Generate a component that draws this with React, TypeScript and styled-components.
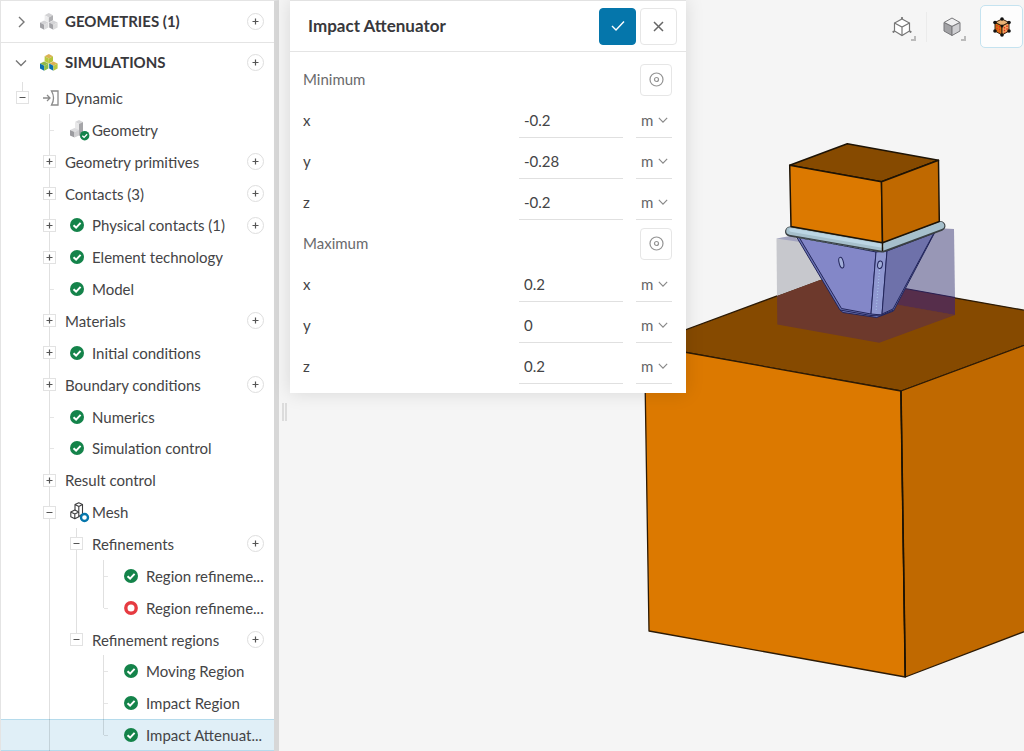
import React from "react";
import styled, { createGlobalStyle, css } from "styled-components";

const color = {
  text: "#444446",
  strong: "#38383c",
  muted: "#6a6a6c",
  line: "#e4e4e4",
  blue: "#0576ab",
  green: "#14834a",
  red: "#e63b41",
  canvas: "#f5f5f5",
};

const GlobalStyle = createGlobalStyle`
  *, *::before, *::after { box-sizing: border-box; }
  body { margin: 0; font-family: Lato, "Liberation Sans", sans-serif; font-size: 15px; color: ${color.text}; }
  button, input, select { font: inherit; color: inherit; margin: 0; }
  svg { display: block; }
`;

/* ---------- layout ---------- */

const Workbench = styled.div`
  display: flex;
  height: 100vh;
  overflow: hidden;
  background: ${color.canvas};
`;

const Sidebar = styled.nav`
  display: flex;
  flex-direction: column;
  flex: none;
  width: 279px;
  background: #fff;
  border: solid ${color.line};
  border-width: 1px 0 0 1px;
  border-right: 5px solid #d7d7d7;
`;

const SectionHead = styled.div<{ $divided?: boolean }>`
  display: flex;
  align-items: center;
  flex: none;
  height: ${(p) => (p.$divided ? 42 : 39)}px;
  padding: 0 8px 0 14px;
  border-bottom: ${(p) => (p.$divided ? `1px solid ${color.line}` : "none")};
`;

const SectionToggle = styled.button`
  display: flex;
  align-items: center;
  flex: 1;
  height: 100%;
  padding: 0;
  border: 0;
  background: none;
  text-align: left;
  color: ${color.strong};
  cursor: pointer;
`;

const SectionTitle = styled.span`
  padding-bottom: 2px;
  line-height: 18px;
  font-weight: 700;
`;

const HeadSlot = styled.span`
  width: 25px;
`;

const Tree = styled.ul`
  display: flex;
  flex-direction: column;
  flex: 1;
  min-height: 0;
  margin: 0;
  padding: 0;
  list-style: none;
`;

const TreeRow = styled.li<{ $selected?: boolean }>`
  display: flex;
  align-items: center;
  flex: 1 1 32px;
  max-height: 32px;
  padding: 0 8px;
  ${(p) =>
    p.$selected &&
    css`
      background: #e0eff7;
      box-shadow: inset 0 1px #b5dbec, inset 0 -1px #b5dbec;
    `}
`;

type GuideKind = "none" | "line" | "tee" | "elbow" | "upper";

const Guide = styled.span<{ $kind: GuideKind }>`
  position: relative;
  display: flex;
  align-items: center;
  justify-content: center;
  align-self: stretch;
  flex: 0 0 27px;
  &::before {
    content: "";
    display: ${(p) => (p.$kind === "none" ? "none" : "block")};
    position: absolute;
    left: 13px;
    top: 0;
    width: 1px;
    height: ${(p) => (p.$kind === "elbow" || p.$kind === "upper" ? "50%" : "100%")};
    background: rgba(0, 0, 0, 0.12);
  }
  &::after {
    content: "";
    display: ${(p) => (p.$kind === "tee" || p.$kind === "elbow" ? "block" : "none")};
    position: absolute;
    left: 14px;
    top: 50%;
    width: 4px;
    height: 1px;
    background: rgba(0, 0, 0, 0.1);
  }
`;

const ExpandButton = styled.button`
  position: relative;
  z-index: 1;
  display: grid;
  place-items: center;
  width: 13px;
  height: 13px;
  padding: 0;
  border: 1px solid #e2e2e2;
  background: #fff;
  color: #555;
`;

const NodeBody = styled.span`
  display: flex;
  align-items: center;
  flex: 1;
  min-width: 0;
`;

const NodeIcon = styled.span`
  flex: 0 0 27px;
  padding-left: 7px;
`;

const NodeLabel = styled.a`
  flex: 1;
  min-width: 0;
  padding-left: 2px;
  line-height: 20px;
  overflow: hidden;
  text-overflow: ellipsis;
  white-space: nowrap;
  color: inherit;
  text-decoration: none;
`;

const AddButton = styled.button`
  display: grid;
  place-items: center;
  flex: none;
  width: 17px;
  height: 17px;
  margin-right: 2px;
  padding: 0;
  border: 1px solid #dedede;
  border-radius: 50%;
  background: #fff;
  color: #555;
`;

const Viewer = styled.main`
  position: relative;
  flex: 1;
  min-width: 0;
  padding-left: 11px;
  background: ${color.canvas};
`;

const Scene = styled.svg`
  position: absolute;
  inset: 0;
  width: 100%;
  height: 100%;
`;

const Splitter = styled.div`
  position: absolute;
  left: 3px;
  top: 403px;
  width: 5px;
  height: 18px;
  border: solid #dcdcdc;
  border-width: 0 2px;
`;

const Panel = styled.form`
  position: relative;
  width: 396px;
  background: #fff;
  border-top: 1px solid #e2e2e2;
  box-shadow: 0 0 18px rgba(0, 0, 0, 0.12);
`;

const PanelHead = styled.header`
  display: flex;
  align-items: center;
  gap: 4px;
  height: 51px;
  padding: 0 9px 0 18px;
  border-bottom: 1px solid ${color.line};
`;

const PanelTitle = styled.h1`
  flex: 1;
  margin: 0;
  font-size: 17px;
  line-height: 24px;
  font-weight: 700;
  color: ${color.strong};
`;

const PanelButton = styled.button<{ $primary?: boolean }>`
  display: grid;
  place-items: center;
  width: 37px;
  height: 37px;
  padding: 0;
  border: 1px solid ${(p) => (p.$primary ? color.blue : "#e6e6e6")};
  border-radius: 4px;
  background: ${(p) => (p.$primary ? color.blue : "#fff")};
  color: ${(p) => (p.$primary ? "#fff" : "#666")};
`;

const Fields = styled.div`
  padding: 4px 14px 9px 13px;
`;

const FieldSet = styled.fieldset`
  margin: 0;
  padding: 0;
  border: 0;
`;

const FieldRow = styled.div`
  display: flex;
  align-items: center;
  height: 41px;
  padding-top: 6px;
`;

const FieldName = styled.label`
  flex: 1;
  padding-bottom: 2px;
`;

const GroupName = styled.span`
  flex: 1;
  padding-bottom: 2px;
  color: ${color.muted};
`;

const PickButton = styled.button`
  display: grid;
  place-items: center;
  width: 32px;
  height: 32px;
  padding: 0;
  border: 1px solid #e6e6e6;
  border-radius: 4px;
  background: #fff;
  color: #949494;
`;

const ValueInput = styled.input`
  width: 104px;
  height: 35px;
  margin-right: 13px;
  padding: 0 5px;
  border: 0;
  border-bottom: 1px solid #e0e0e0;
  background: none;
`;

const UnitField = styled.span`
  position: relative;
  width: 36px;
  height: 35px;
  border-bottom: 1px solid #e0e0e0;
  color: #666;
  svg {
    position: absolute;
    right: 4px;
    top: 12px;
    pointer-events: none;
  }
`;

const UnitSelect = styled.select`
  appearance: none;
  width: 100%;
  height: 100%;
  padding: 0 0 0 5px;
  border: 0;
  background: none;
`;

const ViewBar = styled.div`
  position: absolute;
  top: 5px;
  right: 1px;
  display: flex;
  align-items: center;
  gap: 7px;
`;

const ViewButton = styled.button<{ $active?: boolean }>`
  position: relative;
  display: grid;
  place-items: center;
  width: 43px;
  height: 43px;
  padding: 0;
  border: 1px solid ${(p) => (p.$active ? "#c5e3f0" : "transparent")};
  border-radius: 5px;
  background: ${(p) => (p.$active ? "#fdfdfd" : "none")};
`;

const MenuCorner = styled.span`
  position: absolute;
  right: 6px;
  bottom: 6px;
  width: 5px;
  height: 5px;
  border: solid #bbb;
  border-width: 0 2px 2px 0;
`;

const ViewDivider = styled.span`
  width: 1px;
  height: 30px;
  margin: 0 -4px;
  background: #ebebeb;
`;

/* ---------- icons ---------- */

const Plus = () => (
  <svg width="7" height="7" viewBox="0 0 7 7" stroke="currentColor" strokeWidth="1.2">
    <path d="M3.5 0.5v6M0.5 3.5h6" />
  </svg>
);

const Minus = () => (
  <svg width="7" height="7" viewBox="0 0 7 7" stroke="currentColor" strokeWidth="1">
    <path d="M0.5 3.5h6" />
  </svg>
);

const Chevron = ({ open, size = 12, tone = "#777" }: { open?: boolean; size?: number; tone?: string }) => (
  <svg width={size} height={size} viewBox="0 0 12 12" fill="none" stroke={tone} strokeWidth="1.4">
    <path d={open ? "M1 3.5l5 5 5-5" : "M4 1l5 5-5 5"} />
  </svg>
);

type Shades = { top: string; left: string; right: string };

const Block = ({ x, y, top, left, right }: Shades & { x: number; y: number }) => (
  <g transform={`translate(${x} ${y})`}>
    <path d="M0 2.2L4.2 0L8.4 2.2L4.2 4.4z" fill={top} />
    <path d="M0 2.2L4.2 4.4V9.4L0 7.2z" fill={left} />
    <path d="M8.4 2.2L4.2 4.4V9.4L8.4 7.2z" fill={right} />
  </g>
);

const Cubes = ({ colored }: { colored?: boolean }) => {
  const back = colored
    ? { top: "#dcb255", left: "#b9c83f", right: "#b4c43c" }
    : { top: "#d2d2d4", left: "#ececed", right: "#b0b0b3" };
  const left = colored
    ? { top: "#8fb84a", left: "#0a70b0", right: "#8fbf4a" }
    : { top: "#d4d4d6", left: "#a2a2a6", right: "#dcdcdd" };
  const right = colored
    ? { top: "#dcb255", left: "#0a70b0", right: "#b9c63f" }
    : { top: "#d4d4d6", left: "#a2a2a6", right: "#dcdcdd" };
  return (
    <svg width="18" height="17" viewBox="0 0 18 17">
      <Block x={4.6} y={0} {...back} />
      <Block x={0} y={7.4} {...left} />
      <Block x={9.2} y={7.4} {...right} />
    </svg>
  );
};

const CheckBadge = () => (
  <>
    <circle cx="7" cy="7" r="7" fill={color.green} />
    <path d="M3.5 7.2L6.1 9.6L10.6 4.9" fill="none" stroke="#fff" strokeWidth="2" />
  </>
);

const StatusDone = () => (
  <svg width="14" height="14" viewBox="0 0 14 14">
    <CheckBadge />
  </svg>
);

const StatusOpen = () => (
  <svg width="14" height="14" viewBox="0 0 14 14">
    <circle cx="7" cy="7" r="5.2" fill="#fff" stroke={color.red} strokeWidth="3.4" />
  </svg>
);

const DynamicIcon = () => (
  <svg width="17" height="16" viewBox="1 0 17 16" fill="none" stroke="#8b8b8b" strokeWidth="1.3">
    <path d="M0 8h7.5M5 5l3 3-3 3" />
    <path d="M9.5 1H16v14H9.500c2.600-4.500 2.600-9.500 0-14z" />
  </svg>
);

const GeometryIcon = () => (
  <svg width="20" height="22" viewBox="0 0 20 22">
    <path d="M5 3L9 1L13 3L9 5z" fill="#d6d6d8" />
    <path d="M5 3L9 5V13L5 11z" fill="#e8e8e9" />
    <path d="M13 3L9 5V17L13 15z" fill="#a6a6a9" />
    <path d="M0 11L4.500 9L9 11L4.500 13z" fill="#dcdcde" />
    <path d="M0 11L4.500 13V18.500L0 16.500z" fill="#9b9b9f" />
    <path d="M9 11L4.500 13V18.500L9 16.500z" fill="#cfcfd1" />
    <g transform="translate(10 12) scale(0.67)">
      <CheckBadge />
    </g>
  </svg>
);

const MeshIcon = () => (
  <svg width="20" height="22" viewBox="0 0 20 22" fill="none" stroke="#3d3d3f" strokeWidth="1.100" strokeLinejoin="round">
    <path d="M5 3.500L8.800 1.800L12.500 3.500L8.800 5.400zM5 3.500V9.500M8.800 5.400V10.500M12.500 3.500V13L8.800 15.500" />
    <path d="M0.800 11L4.800 9L8.800 11L4.800 13zM0.800 11V15.800L4.800 17.800L8.800 15.800V11M4.800 13V17.800" />
    <circle cx="14.500" cy="16.500" r="3.500" fill="#fff" stroke={color.blue} strokeWidth="2.400" />
  </svg>
);

const CheckMark = () => (
  <svg width="14" height="12" viewBox="0 0 14 12" fill="none" stroke="currentColor" strokeWidth="1.4">
    <path d="M1 6l4 4 8-8.5" />
  </svg>
);

const Cross = () => (
  <svg width="11" height="11" viewBox="0 0 11 11" fill="none" stroke="currentColor" strokeWidth="1.5">
    <path d="M1 1l9 9M10 1l-9 9" />
  </svg>
);

const Target = () => (
  <svg width="15" height="15" viewBox="0 0 15 15" fill="none" stroke="currentColor" strokeWidth="1.2">
    <circle cx="7.5" cy="7.5" r="6.5" />
    <circle cx="7.5" cy="7.5" r="2" />
  </svg>
);

const WireCube = () => (
  <svg width="20" height="22" viewBox="0 0 20 22" fill="none" stroke="#777" strokeWidth="1.2">
    <path d="M10 3L17.500 7V15L10 19.500L2.500 15V7z" fill="#fff" />
    <path d="M2.500 7L10 11L17.500 7M10 11V19.500M10 3V1.500M2.500 15L1 16M17.500 15L19 16" />
    <g fill="#777" stroke="none">
      <circle cx="10" cy="2" r="1.1" />
      <circle cx="1.500" cy="15.800" r="1.1" />
      <circle cx="18.500" cy="15.800" r="1.1" />
    </g>
  </svg>
);

const SolidCube = () => (
  <svg width="18" height="20" viewBox="0 0 18 20" stroke="#77777a" strokeWidth="1">
    <path d="M1 5.5L9 1L17 5.5L9 9.5z" fill="#efeff0" />
    <path d="M1 5.5L9 9.5V18.5L1 14z" fill="#a3a3a6" />
    <path d="M17 5.5L9 9.5V18.5L17 14z" fill="#cfcfd2" />
  </svg>
);

const MeshedCube = () => (
  <svg width="20" height="22" viewBox="0 0 20 22" stroke="#38220f" strokeWidth="1">
    <path d="M3 6.500L10 3L17 6.500L10 10z" fill="#e9b375" />
    <path d="M3 6.500L10 10V19L3 15z" fill="#d97912" />
    <path d="M17 6.500L10 10V19L17 15z" fill="#f3a860" />
    <path d="M5 9v6M7.5 10v6.5M12.5 11v6M15 9.5v6" stroke="#e12b1d" strokeWidth="1.4" strokeDasharray="1.5 1.2" />
    <g fill="#111" stroke="none">
      <circle cx="10" cy="3" r="1.800" />
      <circle cx="3" cy="6.500" r="1.800" />
      <circle cx="17" cy="6.500" r="1.800" />
      <circle cx="10" cy="10" r="1.500" />
      <circle cx="3" cy="15" r="1.800" />
      <circle cx="17" cy="15" r="1.800" />
      <circle cx="10" cy="19" r="1.800" />
    </g>
  </svg>
);

/* ---------- 3D scene ---------- */

const Model = () => (
  <Scene viewBox="279 0 745 751" preserveAspectRatio="xMaxYMin slice" aria-label="Impact model">
    <g stroke="#2c1a05" strokeWidth="1.3" strokeLinejoin="round">
      <path d="M644.5 345L831 276L1060 316.5L1060 332L901 391z" fill="#864a00" />
      <path d="M644.5 345L901 391L905.3 677L649 631z" fill="#dc7900" />
      <path d="M901 391L1060 332L1060 618L905.3 677z" fill="#c06900" />
    </g>
    <path d="M901 391L905.3 677" stroke="#1a1204" strokeWidth="1.6" />

    {/* refinement region box, split where it covers the background and the block */}
    <path d="M776.5 238.5L796 236L823 279L777 296z" fill="#c7c8cd" />
    <path d="M776.5 238.5L793 235.5L800 242z" fill="#a3a4c0" />
    <path d="M935 228L954 229L955 297.5L905 289z" fill="#9897b6" />
    <path d="M777 296L820 280L897 304.5L955 315L879.3 342.7L777.3 324.5z" fill="#6d392c" />
    <path d="M905 288.5L955 297.5V315L896 304.5z" fill="#562e4b" />
    <path d="M905 288.5L955 297.5" stroke="#2a1f52" strokeWidth="1.2" />

    {/* attenuator */}
    <g stroke="#22255a" strokeWidth="1" strokeLinejoin="round">
      <path d="M796 236L840 310L843 312.5L876.7 317.5L893.5 311L935 232L882 248z" fill="#6c74b4" />
      <path d="M799 237L876 252L871 314L841.5 308.5z" fill="#8387c8" />
      <path d="M876 252L887 251L882 315L871 314z" fill="#8f97d0" />
      <path d="M887 251L934 233L893 309L882 314z" fill="#6e71aa" />
      <path d="M840 310L871 315.5L882 315L893.5 310" fill="none" />
      <ellipse cx="841.3" cy="262.7" rx="2.2" ry="5.5" fill="#a2aed9" transform="rotate(-14 841.3 262.7)" />
      <ellipse cx="880" cy="264.7" rx="2.4" ry="3.8" fill="#a2aed9" transform="rotate(8 880 264.7)" />
    </g>
    <path d="M879.5 270L876 312" stroke="#a9c6ea" strokeWidth="1" strokeDasharray="1 2" />

    {/* flange */}
    <g fill="none" strokeLinecap="round" strokeLinejoin="round">
      <path d="M790 231.5L882.5 247.5L940.5 226" stroke="#3a4043" strokeWidth="10" />
      <path d="M790 231L882.5 247L940.5 225.5" stroke="#a6c0cc" strokeWidth="7.5" />
      <path d="M791 230L882.5 246" stroke="#bcd6e4" strokeWidth="3.5" />
      <path d="M800 238L872 250.5" stroke="#4e5a66" strokeWidth="1.2" strokeDasharray="3 2.5" />
    </g>

    <g stroke="#1d1305" strokeWidth="1.5" strokeLinejoin="round">
      <path d="M789.7 165.2L847.3 143.8L938.5 160.2L881.5 181.8z" fill="#864a00" />
      <path d="M789.7 165.2L881.5 181.8L882.5 242.7L791 226.5z" fill="#dc7900" />
      <path d="M881.5 181.8L938.5 160.2L939.3 221.5L882.5 242.7z" fill="#c06900" />
      <path d="M882.5 242V251" />
    </g>
  </Scene>
);

/* ---------- data ---------- */

type Node = {
  label: string;
  guides: GuideKind[];
  toggle?: "plus" | "minus";
  icon?: React.ReactNode;
  add?: boolean;
  selected?: boolean;
};

const nodes: Node[] = [
  { label: "Dynamic", guides: ["upper"], toggle: "minus", icon: <DynamicIcon /> },
  { label: "Geometry", guides: ["none", "tee"], icon: <GeometryIcon /> },
  { label: "Geometry primitives", guides: ["none", "line"], toggle: "plus", add: true },
  { label: "Contacts (3)", guides: ["none", "line"], toggle: "plus", add: true },
  { label: "Physical contacts (1)", guides: ["none", "line"], toggle: "plus", icon: <StatusDone />, add: true },
  { label: "Element technology", guides: ["none", "line"], toggle: "plus", icon: <StatusDone /> },
  { label: "Model", guides: ["none", "tee"], icon: <StatusDone /> },
  { label: "Materials", guides: ["none", "line"], toggle: "plus", add: true },
  { label: "Initial conditions", guides: ["none", "line"], toggle: "plus", icon: <StatusDone /> },
  { label: "Boundary conditions", guides: ["none", "line"], toggle: "plus", add: true },
  { label: "Numerics", guides: ["none", "tee"], icon: <StatusDone /> },
  { label: "Simulation control", guides: ["none", "tee"], icon: <StatusDone /> },
  { label: "Result control", guides: ["none", "line"], toggle: "plus" },
  { label: "Mesh", guides: ["none", "line"], toggle: "minus", icon: <MeshIcon /> },
  { label: "Refinements", guides: ["none", "line", "line"], toggle: "minus", add: true },
  { label: "Region refineme...", guides: ["none", "line", "line", "tee"], icon: <StatusDone /> },
  { label: "Region refineme...", guides: ["none", "line", "line", "elbow"], icon: <StatusOpen /> },
  { label: "Refinement regions", guides: ["none", "line", "upper"], toggle: "minus", add: true },
  { label: "Moving Region", guides: ["none", "line", "none", "tee"], icon: <StatusDone /> },
  { label: "Impact Region", guides: ["none", "line", "none", "tee"], icon: <StatusDone /> },
  { label: "Impact Attenuat...", guides: ["none", "line", "none", "elbow"], icon: <StatusDone />, selected: true },
];

const groups = [
  { name: "Minimum", values: { x: "-0.2", y: "-0.28", z: "-0.2" } },
  { name: "Maximum", values: { x: "0.2", y: "0", z: "0.2" } },
];

/* ---------- parts ---------- */

const TreeNode = ({ node }: { node: Node }) => (
  <TreeRow $selected={node.selected}>
    {node.guides.map((kind, i) => (
      <Guide key={i} $kind={kind}>
        {node.toggle && i === node.guides.length - 1 && (
          <ExpandButton type="button" aria-label={`Toggle ${node.label}`}>
            {node.toggle === "plus" ? <Plus /> : <Minus />}
          </ExpandButton>
        )}
      </Guide>
    ))}
    <NodeBody>
      {node.icon && <NodeIcon>{node.icon}</NodeIcon>}
      <NodeLabel href="#">{node.label}</NodeLabel>
    </NodeBody>
    {node.add && (
      <AddButton type="button" aria-label={`Add to ${node.label}`}>
        <Plus />
      </AddButton>
    )}
  </TreeRow>
);

const Section = ({ title, open, divided }: { title: string; open?: boolean; divided?: boolean }) => (
  <SectionHead $divided={divided}>
    <SectionToggle type="button" aria-expanded={!!open}>
      <HeadSlot>
        <Chevron open={open} />
      </HeadSlot>
      <HeadSlot>
        <Cubes colored={open} />
      </HeadSlot>
      <SectionTitle>{title}</SectionTitle>
    </SectionToggle>
    <AddButton type="button" aria-label={`Add to ${title}`}>
      <Plus />
    </AddButton>
  </SectionHead>
);

const Vector = ({ name, values }: { name: string; values: Record<string, string> }) => (
  <FieldSet aria-label={name}>
    <FieldRow>
      <GroupName>{name}</GroupName>
      <PickButton type="button" aria-label={`Pick ${name}`}>
        <Target />
      </PickButton>
    </FieldRow>
    {Object.entries(values).map(([axis, value]) => (
      <FieldRow key={axis}>
        <FieldName htmlFor={`${name}-${axis}`}>{axis}</FieldName>
        <ValueInput id={`${name}-${axis}`} defaultValue={value} />
        <UnitField>
          <UnitSelect aria-label={`${name} ${axis} unit`}>
            <option>m</option>
          </UnitSelect>
          <Chevron open size={10} tone="#888" />
        </UnitField>
      </FieldRow>
    ))}
  </FieldSet>
);

export default function App() {
  return (
    <Workbench>
      <GlobalStyle />
      <Sidebar>
        <Section title="GEOMETRIES (1)" divided />
        <Section title="SIMULATIONS" open />
        <Tree>
          {nodes.map((node, i) => (
            <TreeNode key={i} node={node} />
          ))}
        </Tree>
      </Sidebar>
      <Viewer>
        <Model />
        <Splitter />
        <Panel onSubmit={(e) => e.preventDefault()}>
          <PanelHead>
            <PanelTitle>Impact Attenuator</PanelTitle>
            <PanelButton $primary type="submit" aria-label="Apply">
              <CheckMark />
            </PanelButton>
            <PanelButton type="button" aria-label="Close">
              <Cross />
            </PanelButton>
          </PanelHead>
          <Fields>
            {groups.map((group) => (
              <Vector key={group.name} {...group} />
            ))}
          </Fields>
        </Panel>
        <ViewBar>
          <ViewButton type="button" aria-label="Wireframe">
            <WireCube />
            <MenuCorner />
          </ViewButton>
          <ViewDivider />
          <ViewButton type="button" aria-label="Solid">
            <SolidCube />
            <MenuCorner />
          </ViewButton>
          <ViewButton $active type="button" aria-label="Surfaces with mesh">
            <MeshedCube />
          </ViewButton>
        </ViewBar>
      </Viewer>
    </Workbench>
  );
}
